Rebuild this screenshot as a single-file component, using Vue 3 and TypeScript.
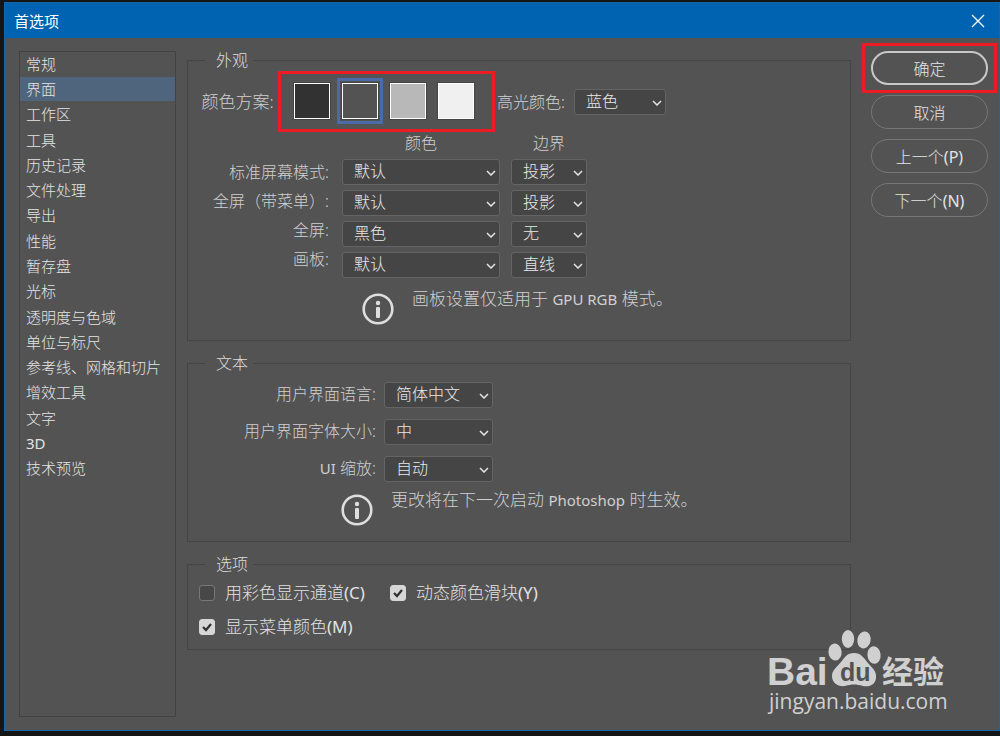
<script setup lang="ts">
import { ref } from 'vue'

interface ModeRow {
  id: string
  label: string
  color: string
  border: string
}

interface TextRow {
  id: string
  prefix?: string
  label: string
  value: string
  options: string[]
}

const categories: string[] = [
  '常规', '界面', '工作区', '工具', '历史记录', '文件处理', '导出', '性能', '暂存盘',
  '光标', '透明度与色域', '单位与标尺', '参考线、网格和切片', '增效工具', '文字', '3D', '技术预览',
]
const current = ref('界面')
const isLatin = (s: string): boolean => /^[\x20-\x7e]+$/.test(s)

const schemes = [
  { id: 'darkest', name: '深黑' },
  { id: 'dark', name: '深灰' },
  { id: 'medium', name: '中灰' },
  { id: 'light', name: '浅灰' },
]
const scheme = ref('dark')
const highlight = ref('蓝色')

const modes = ref<ModeRow[]>([
  { id: 'standard', label: '标准屏幕模式:', color: '默认', border: '投影' },
  { id: 'fullmenu', label: '全屏（带菜单）:', color: '默认', border: '投影' },
  { id: 'full', label: '全屏:', color: '黑色', border: '无' },
  { id: 'artboard', label: '画板:', color: '默认', border: '直线' },
])
const colorOptions = ['默认', '黑色']
const borderOptions = ['投影', '直线', '无']

const textRows = ref<TextRow[]>([
  { id: 'lang', label: '用户界面语言:', value: '简体中文', options: ['简体中文'] },
  { id: 'size', label: '用户界面字体大小:', value: '中', options: ['小', '中', '大'] },
  { id: 'scale', prefix: 'UI', label: ' 缩放:', value: '自动', options: ['自动', '100%', '200%'] },
])

const channels = ref(false)
const sliders = ref(true)
const menuColors = ref(true)
</script>

<template>
  <div class="desktop">
    <div class="dialog" role="dialog" aria-labelledby="dialog-title">
      <header class="titlebar">
        <h1 id="dialog-title">首选项</h1>
        <button class="close" type="button" aria-label="关闭">
          <svg width="14" height="14" viewBox="0 0 14 14"><path d="M1 1L13 13M13 1L1 13" /></svg>
        </button>
      </header>

      <div class="content">
        <nav class="sidebar">
          <ul>
            <li v-for="c in categories" :key="c">
              <button
                type="button"
                :class="{ active: c === current, latin: isLatin(c) }"
                @click="current = c"
              >{{ c }}</button>
            </li>
          </ul>
        </nav>

        <main class="panels">
          <fieldset class="appearance">
            <legend>外观</legend>
            <div class="scheme-row">
              <span id="scheme-label" class="scheme-label">颜色方案:</span>
              <div class="swatches" role="radiogroup" aria-labelledby="scheme-label">
                <input
                  v-for="s in schemes"
                  :key="s.id"
                  v-model="scheme"
                  type="radio"
                  name="scheme"
                  :value="s.id"
                  :class="s.id"
                  :aria-label="s.name"
                />
              </div>
              <label for="highlight">高光颜色:</label>
              <span class="drop drop-highlight">
                <select id="highlight" v-model="highlight">
                  <option>蓝色</option>
                  <option>默认</option>
                </select>
                <svg viewBox="0 0 10 6"><path d="M1 1L5 5L9 1" /></svg>
              </span>
            </div>

            <div class="mode-grid">
              <div class="mode-labels">
                <label v-for="m in modes" :key="m.id" :for="'color-' + m.id">{{ m.label }}</label>
              </div>
              <div class="mode-column wide">
                <span class="heading">颜色</span>
                <span v-for="m in modes" :key="m.id" class="drop">
                  <select :id="'color-' + m.id" v-model="m.color">
                    <option v-for="o in colorOptions" :key="o">{{ o }}</option>
                  </select>
                  <svg viewBox="0 0 10 6"><path d="M1 1L5 5L9 1" /></svg>
                </span>
              </div>
              <div class="mode-column narrow">
                <span class="heading">边界</span>
                <span v-for="m in modes" :key="m.id" class="drop">
                  <select v-model="m.border" :aria-label="m.label + ' 边界'">
                    <option v-for="o in borderOptions" :key="o">{{ o }}</option>
                  </select>
                  <svg viewBox="0 0 10 6"><path d="M1 1L5 5L9 1" /></svg>
                </span>
              </div>
            </div>

            <div class="note note-artboard">
              <svg class="info" viewBox="0 0 32 32">
                <circle cx="16" cy="16" r="14.3" />
                <circle class="solid" cx="16" cy="10" r="2.2" />
                <rect class="solid" x="14" y="14" width="4" height="11" rx="1" />
              </svg>
              <p>画板设置仅适用于 <span class="latin">GPU RGB</span> 模式。</p>
            </div>
          </fieldset>

          <fieldset class="text">
            <legend>文本</legend>
            <div class="text-grid">
              <template v-for="r in textRows" :key="r.id">
                <label :for="r.id"><span v-if="r.prefix" class="latin">{{ r.prefix }}</span>{{ r.label }}</label>
                <span class="drop">
                  <select :id="r.id" v-model="r.value">
                    <option v-for="o in r.options" :key="o">{{ o }}</option>
                  </select>
                  <svg viewBox="0 0 10 6"><path d="M1 1L5 5L9 1" /></svg>
                </span>
              </template>
            </div>
            <div class="note note-restart">
              <svg class="info" viewBox="0 0 32 32">
                <circle cx="16" cy="16" r="14.3" />
                <circle class="solid" cx="16" cy="10" r="2.2" />
                <rect class="solid" x="14" y="14" width="4" height="11" rx="1" />
              </svg>
              <p>更改将在下一次启动 <span class="latin">Photoshop</span> 时生效。</p>
            </div>
          </fieldset>

          <fieldset class="options">
            <legend>选项</legend>
            <div class="checks">
              <label class="check">
                <input v-model="channels" type="checkbox" />
                <svg viewBox="0 0 16 16"><path d="M4 8L7 11L12 5" /></svg>
                <span>用彩色显示通道<span class="key">(C)</span></span>
              </label>
              <label class="check">
                <input v-model="sliders" type="checkbox" />
                <svg viewBox="0 0 16 16"><path d="M4 8L7 11L12 5" /></svg>
                <span>动态颜色滑块<span class="key">(Y)</span></span>
              </label>
            </div>
            <div class="checks">
              <label class="check">
                <input v-model="menuColors" type="checkbox" />
                <svg viewBox="0 0 16 16"><path d="M4 8L7 11L12 5" /></svg>
                <span>显示菜单颜色<span class="key">(M)</span></span>
              </label>
            </div>
          </fieldset>
        </main>

        <aside class="actions">
          <div class="marked"><button class="primary" type="button">确定</button></div>
          <button type="button">取消</button>
          <button type="button">上一个<span class="key">(P)</span></button>
          <button type="button">下一个<span class="key">(N)</span></button>
        </aside>
      </div>

      <svg class="watermark" viewBox="0 0 184 92" role="img" aria-label="Baidu 经验 jingyan.baidu.com">
        <text class="brand" x="0" y="57">Bai</text>
        <ellipse cx="68" cy="24" rx="6.6" ry="8.6" transform="rotate(-6 68 24)" />
        <ellipse cx="81" cy="11" rx="6.2" ry="9" />
        <ellipse cx="97" cy="12" rx="6.6" ry="8.6" transform="rotate(10 97 12)" />
        <ellipse cx="107" cy="27" rx="6.6" ry="8.8" transform="rotate(-6 107 27)" />
        <path d="M87 25C94 25 97 30 101 35C105 40 110 43 109 50C108 58 101 59 96 58C89 56 85 56 78 58C71 59 65 55 65 48C65 42 70 39 74 34C78 29 80 25 87 25Z" />
        <text class="du" x="73" y="53">du</text>
        <text class="cjk" x="115" y="55">经验</text>
        <text class="url" x="2" y="81">jingyan.baidu.com</text>
      </svg>
    </div>
  </div>
</template>

<style>
html,
body {
  margin: 0;
  background: #151515;
}
</style>

<style scoped>
* {
  box-sizing: border-box;
}

.desktop {
  min-height: 100vh;
  padding: 2px 0 5px 4px;
  display: flex;
  background: #151515;
  color: #d0d0d0;
  font: 300 16px/22px "Noto Sans", "Noto Sans CJK SC", sans-serif;
}

.dialog {
  position: relative;
  flex: 1;
  display: flex;
  flex-direction: column;
  border: 1px solid #1667a8;
  background: #535353;
}

.titlebar {
  height: 35px;
  padding: 0 14px 0 9px;
  display: flex;
  align-items: center;
  justify-content: space-between;
  background: #0063b1;
}

h1 {
  margin: 0;
  color: #fff;
  font-size: 15px;
  font-weight: 400;
}

button,
select {
  font: inherit;
  color: inherit;
}

.latin {
  font-size: 15px;
  font-weight: 400;
}

.key {
  font-weight: 400;
}

.close {
  display: flex;
  padding: 0;
  border: 0;
  background: none;
}

.close path {
  fill: none;
  stroke: #fff;
  stroke-width: 1.3;
}

.content {
  flex: 1;
  display: flex;
  padding: 13px 11px 13px 14px;
}

.sidebar {
  flex: none;
  width: 157px;
  border: 1px solid #424242;
  font-size: 15px;
}

.sidebar ul {
  height: 428px;
  margin: 0;
  padding: 0;
  display: grid;
  grid-auto-rows: 1fr;
  gap: 2px;
  list-style: none;
}

.sidebar li {
  display: flex;
}

.sidebar button {
  flex: 1;
  padding: 0 0 0 6px;
  border: 0;
  background: none;
  text-align: left;
  line-height: 22px;
  color: #e4e4e4;
}

.sidebar button.latin {
  font-weight: 400;
}

.sidebar button.active {
  background: #4f657d;
}

.panels {
  flex: 1;
  min-width: 0;
  margin: -2px 20px 0 11px;
  display: flex;
  flex-direction: column;
  gap: 11px;
}

fieldset {
  min-width: 0;
  margin: 0;
  padding: 0 12px;
  border: 1px solid #454545;
}

legend {
  margin-left: 5px;
  padding: 0 5px 0 11px;
  color: #dcdcdc;
}

.appearance,
.text {
  padding-bottom: 15px;
}

.scheme-row {
  display: flex;
  align-items: center;
}

.scheme-label {
  width: 75px;
  margin-right: 3px;
  font-size: 17px;
  text-align: center;
}

.swatches {
  display: flex;
  gap: 12px;
  margin-right: 2px;
  padding: 9px 18px 10px 13px;
  border: 3px solid #ed1c24;
}

.swatches input {
  appearance: none;
  width: 36px;
  height: 36px;
  margin: 0;
  border: 1px solid #fff;
  box-shadow: 0 0 0 1px #444;
}

.swatches input:checked {
  outline: 3px solid #4a6ba8;
  outline-offset: 2px;
}

.darkest {
  background: #323232;
}

.dark {
  background: #535353;
}

.medium {
  background: #b8b8b8;
}

.light {
  background: #f0f0f0;
}

.drop {
  position: relative;
  display: block;
}

.drop select {
  appearance: none;
  display: block;
  width: 100%;
  height: 26px;
  margin: 0;
  padding: 0 20px 2px 11px;
  border: 1px solid #646464;
  border-radius: 3px;
  background: #454545;
  color: #e8e8e8;
}

.drop svg {
  position: absolute;
  right: 4px;
  top: 11px;
  width: 10px;
  height: 6px;
  pointer-events: none;
}

.drop path {
  fill: none;
  stroke: #e4e4e4;
  stroke-width: 1.5;
}

.drop-highlight {
  width: 92px;
  margin-left: 9px;
}

.mode-grid {
  display: flex;
}

.mode-labels {
  width: 129px;
  margin-right: 13px;
  padding-top: 26px;
  display: flex;
  flex-direction: column;
  text-align: right;
  line-height: 29px;
}

.mode-column {
  display: flex;
  flex-direction: column;
  gap: 5px;
}

.heading {
  text-align: center;
}

.wide {
  width: 158px;
  margin-right: 11px;
}

.narrow {
  width: 76px;
}

.note {
  display: flex;
  align-items: flex-start;
  font-size: 17px;
}

.note p {
  margin: 0;
}

.note-artboard {
  padding: 10px 0 0 162px;
  gap: 18px;
}

.note-restart {
  padding: 7px 0 0 141px;
  gap: 18px;
}

.info {
  width: 32px;
  height: 32px;
  margin-top: 5px;
}

.info circle {
  fill: none;
  stroke: #dedede;
  stroke-width: 2.6;
}

.info .solid {
  fill: #dedede;
  stroke: none;
}

.text-grid {
  padding-top: 8px;
  display: grid;
  grid-template-columns: 176px 109px;
  gap: 11px 8px;
  align-items: center;
}

.text-grid label {
  padding-bottom: 2px;
  text-align: right;
}

.options {
  padding: 0 11px 11px;
}

.options legend {
  margin-left: 6px;
}

.checks {
  display: flex;
  gap: 25px;
  padding-top: 7px;
}

.checks + .checks {
  padding-top: 12px;
}

.check {
  position: relative;
  display: flex;
  align-items: center;
  gap: 10px;
  font-size: 17px;
  color: #e2e2e2;
}

.check input {
  appearance: none;
  width: 16px;
  height: 16px;
  margin: 0;
  border: 1px solid #777;
  border-radius: 3px;
  background: #474747;
}

.check input:checked {
  border-color: #d6d6d6;
  background: #d6d6d6;
}

.check svg {
  position: absolute;
  left: 0;
  top: 3px;
  width: 16px;
  height: 16px;
  visibility: hidden;
  pointer-events: none;
}

.check input:checked + svg {
  visibility: visible;
}

.check path {
  fill: none;
  stroke: #303030;
  stroke-width: 2.2;
}

.actions {
  flex: none;
  width: 117px;
  display: flex;
  flex-direction: column;
  gap: 10px;
}

.actions button {
  width: 100%;
  height: 34px;
  padding: 1px 0 0;
  border: 1px solid #777;
  border-radius: 17px;
  background: none;
  color: #e4e4e4;
}

.actions .primary {
  border: 2px solid #c8c8c8;
}

.marked {
  position: relative;
}

.marked button {
  display: block;
}

.marked::after {
  content: "";
  position: absolute;
  inset: -8px -9px -8px -9px;
  border: 3px solid #ed1c24;
  pointer-events: none;
}

.watermark {
  position: absolute;
  right: 48px;
  bottom: 10px;
  width: 184px;
  height: 92px;
  fill: #d0d0d0;
}

.brand {
  font: 700 39px "Liberation Sans", sans-serif;
}

.du {
  font: 700 25px "Liberation Sans", sans-serif;
  fill: #535353;
}

.cjk {
  font: 700 31px "Noto Sans CJK SC", sans-serif;
}

.url {
  font: 500 21px "Open Sans", sans-serif;
}
</style>
